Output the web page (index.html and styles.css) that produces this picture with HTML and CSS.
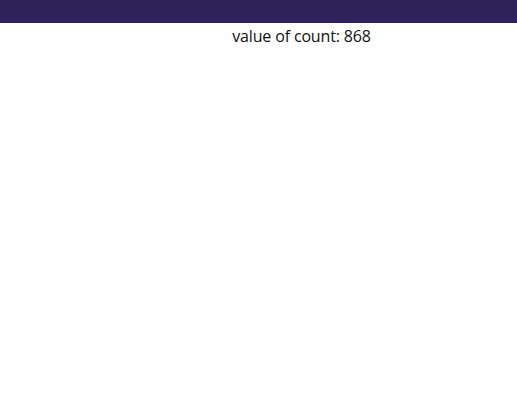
FILE: index.html
```html
<!DOCTYPE html>
<html>
<head>
<meta charset="utf-8">
<link rel="stylesheet" href="styles.css">
</head>
<body>
<header class="topbar"></header>
<main class="content">
  <p class="count">value of count: 868</p>
</main>
</body>
</html>
```
FILE: styles.css
```css
html, body {
  margin: 0;
  padding: 0;
  background: #ffffff;
}
body {
  font-family: "Open Sans", "DejaVu Sans", sans-serif;
  color: #111111;
}
.topbar {
  height: 23px;
  background: #2e2359;
}
.content {
  display: flex;
  justify-content: center;
  padding-left: 86px;
}
.count {
  margin: 3px 0 0 0;
  font-size: 16px;
  line-height: 20px;
  letter-spacing: -0.15px;
}
```
